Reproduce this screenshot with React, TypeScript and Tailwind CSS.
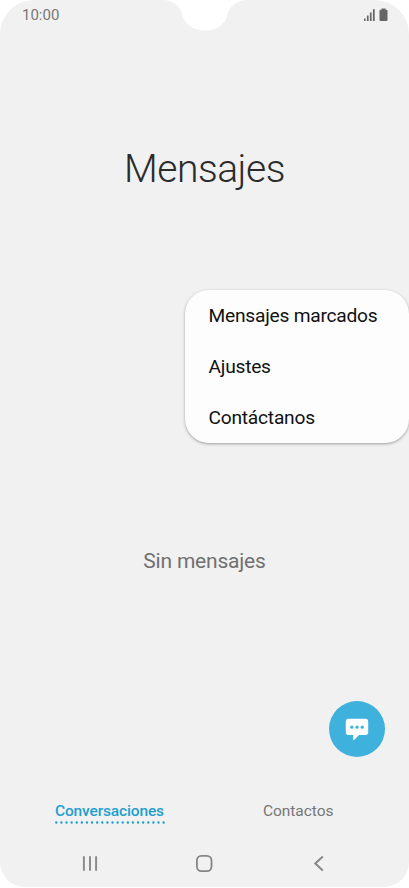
import React from 'react';

const menuItems = ['Mensajes marcados', 'Ajustes', 'Contáctanos'];

function StatusBar() {
  return (
    <header className="relative flex h-[30px] items-center justify-between pl-[22px] pr-[21px]">
      <span className="text-[15px] leading-[30px] text-[#777777]">10:00</span>
      <svg className="absolute left-[160px] top-0" width="90" height="32" viewBox="0 0 90 32">
        <path
          d="M4 0C13 1 20 6 21.5 13C24 24 33 30.5 45 30.5C57 30.5 66 24 68 13C70 6 77 1 86 0Z"
          fill="#ffffff"
        />
      </svg>
      <svg width="24" height="14" viewBox="0 0 24 14" fill="#666666">
        <rect x="0" y="10.5" width="1.5" height="2.5" />
        <rect x="2.9" y="7.5" width="1.7" height="5.5" />
        <rect x="5.9" y="4.5" width="1.7" height="8.5" />
        <rect x="8.9" y="1.2" width="1.8" height="11.8" />
        <path d="M17.5 0.5h4v1.3h1.2q.8 0 .8.8V12q0 1-1 1h-6q-1 0-1-1V2.6q0-.8.8-.8h1.2z" />
      </svg>
    </header>
  );
}

function OptionsMenu() {
  return (
    <div className="ml-auto flex h-[153px] w-[224px] flex-col rounded-[24px] bg-[#fdfdfd] pl-[23.5px] pt-px shadow-[0_1px_3px_rgba(0,0,0,0.35)]">
      {menuItems.map((item) => (
        <button
          key={item}
          className="h-[51px] shrink-0 whitespace-nowrap text-left text-[19.2px] tracking-[-0.24px] text-[#111111]"
        >
          {item}
        </button>
      ))}
    </div>
  );
}

function Tabs() {
  return (
    <nav className="flex h-[30px] items-start pl-[55px]">
      <button className="flex w-[110px] flex-col items-start whitespace-nowrap text-[15.5px] font-medium leading-[20px] tracking-[-0.15px] text-[#1f9fd0]">
        Conversaciones
        <svg width="110" height="3" viewBox="0 0 110 3">
          <path
            d="M1.3 1.5H110"
            stroke="#1f9fd0"
            strokeWidth="2.4"
            strokeLinecap="round"
            strokeDasharray="0 5.11"
          />
        </svg>
      </button>
      <button className="ml-[98px] text-[15.5px] leading-[20px] tracking-[-0.05px] text-[#777777]">
        Contactos
      </button>
    </nav>
  );
}

function NavigationBar() {
  return (
    <footer className="flex h-[17px] items-center pl-[82px]">
      <svg width="16" height="17" viewBox="0 0 16 17" stroke="#8c8c8c" strokeWidth="2" strokeLinecap="round">
        <path d="M1.9 2v13M8 2v13M14.1 2v13" />
      </svg>
      <svg className="ml-[98px]" width="17" height="17" viewBox="0 0 17 17" fill="none" stroke="#858585" strokeWidth="1.8">
        <rect x="0.9" y="0.9" width="14.6" height="15.2" rx="4.5" />
      </svg>
      <svg className="ml-[100px]" width="12" height="17" viewBox="0 0 12 17" fill="none" stroke="#858585" strokeWidth="1.9">
        <path d="M9.8 1.5L2.3 8.5L9.8 15.5" />
      </svg>
    </footer>
  );
}

export default function App() {
  return (
    <div className="h-[888px] w-[409px] overflow-hidden bg-white font-['Roboto',sans-serif]">
      <div className="flex h-[887px] flex-col rounded-b-[25px] rounded-t-[34px] bg-[#f1f1f1]">
        <StatusBar />
        <h1 className="mt-[116px] h-[46px] text-center text-[39px] font-light leading-[46px] tracking-[-0.5px] text-[#2b2b2b]">
          Mensajes
        </h1>
        <div className="mt-[98px]">
          <OptionsMenu />
        </div>
        <p className="mt-[105px] h-[26px] text-center text-[21px] leading-[26px] tracking-[-0.2px] text-[#707070]">
          Sin mensajes
        </p>
        <button className="ml-auto mr-6 mt-[127px] flex h-14 w-14 shrink-0 items-center justify-center rounded-full bg-[#3fb1dd]">
          <svg width="24" height="24" viewBox="0 0 24 24">
            <path
              d="M3.5 1.7h17q2.7 0 2.7 2.7v10.8q0 2.7-2.7 2.7h-6.5l-5 5.1q-.8.5-.8-.5v-4.6H3.5q-2.7 0-2.7-2.7V4.4q0-2.7 2.7-2.7z"
              fill="#ffffff"
            />
            <g fill="#3fb1dd">
              <circle cx="6.8" cy="10.2" r="1.6" />
              <circle cx="12" cy="10.2" r="1.6" />
              <circle cx="17.2" cy="10.2" r="1.6" />
            </g>
          </svg>
        </button>
        <div className="mt-11">
          <Tabs />
        </div>
        <div className="mt-[24px]">
          <NavigationBar />
        </div>
      </div>
    </div>
  );
}
